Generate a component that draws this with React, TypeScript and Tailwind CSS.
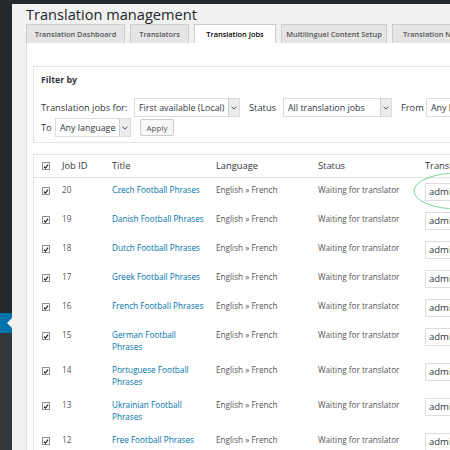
import React from "react";

const jobs = [
  { id: 20, title: ["Czech Football Phrases"] },
  { id: 19, title: ["Danish Football Phrases"] },
  { id: 18, title: ["Dutch Football Phrases"] },
  { id: 17, title: ["Greek Football Phrases"] },
  { id: 16, title: ["French Football Phrases"] },
  { id: 15, title: ["German Football", "Phrases"] },
  { id: 14, title: ["Portuguese Football", "Phrases"] },
  { id: 13, title: ["Ukrainian Football", "Phrases"] },
  { id: 12, title: ["Free Football Phrases"] },
];

const tabs = [
  { label: "Translation Dashboard", w: "w-[99px]" },
  { label: "Translators", w: "w-[59px]" },
  { label: "Translation Jobs", w: "w-[82px]", active: true },
  { label: "Multilingual Content Setup", w: "w-[106px]" },
  { label: "Translation Notifications", w: "w-[110px]" },
];

function Check() {
  return (
    <span className="flex h-[8px] w-[8px] shrink-0 items-center justify-center border border-[#8c8f94] bg-white">
      <svg viewBox="0 0 8 8" className="h-[7px] w-[7px]">
        <path d="M1.2 4.2 L3.2 6.2 L6.8 1.6" fill="none" stroke="#1e1e1e" strokeWidth="1.5" />
      </svg>
    </span>
  );
}

function Select({ label, w }: { label: string; w: string }) {
  return (
    <div className={`flex h-[19px] ${w} shrink-0 items-stretch border border-[#dcdcdc] bg-white`}>
      <span className="flex-1 overflow-hidden whitespace-nowrap pl-[4px] text-[8.9px] leading-[17px] text-[#32373c]">
        {label}
      </span>
      <span className="flex w-[11px] items-center justify-center border-l border-[#cfcfcf] bg-[#ececec]">
        <svg viewBox="0 0 6 4" className="h-[4px] w-[6px]">
          <path d="M0.6 0.6 L3 3.2 L5.4 0.6" fill="none" stroke="#555" strokeWidth="1" />
        </svg>
      </span>
    </div>
  );
}

export default function App() {
  return (
    <div
      className="relative flex h-[450px] w-[450px] flex-col overflow-hidden bg-[#23282d]"
      style={{ fontFamily: '"Open Sans", "Liberation Sans", sans-serif' }}
    >
      <div className="h-[4px] shrink-0 bg-[#23282d]" />
      <div className="flex min-h-0 flex-1">
        {/* admin sidebar */}
        <div className="flex w-[12px] shrink-0 flex-col">
          <div className="h-[309px] bg-[#23282d]" />
          <div className="relative h-[20px] bg-[#0073aa]">
            <span className="absolute right-0 top-[5px] h-0 w-0 border-y-[5px] border-r-[5px] border-y-transparent border-r-[#f1f1f1]" />
          </div>
          <div className="flex-1 bg-[#32373c]" />
        </div>

        {/* main */}
        <div className="min-w-0 flex-1 bg-[#f1f1f1] pl-[14px]">
          <h1 className="h-[20px] whitespace-nowrap text-[14.6px] font-normal leading-[20px] text-[#23282d]">
            Translation management
          </h1>
          <div className="flex h-[19px] gap-[5px]">
            {tabs.map((t) => (
              <div
                key={t.label}
                className={`${t.w} shrink-0 overflow-hidden whitespace-nowrap border border-b-0 border-[#ccc] text-center text-[7.4px] font-semibold leading-[18px] ${
                  t.active ? "bg-white text-[#000]" : "bg-[#e5e5e5] text-[#555]"
                }`}
              >
                {t.label}
              </div>
            ))}
          </div>

          {/* tab panel */}
          <div className="h-full border-l border-[#ddd] bg-white pl-[6px] pt-[23px]">
            {/* filter */}
            <div className="h-[77px] border border-r-0 border-[#e5e5e5] bg-white pl-[7px] pt-[7px] text-[#32373c]">
              <div className="text-[8.8px] font-bold leading-[13px]">Filter by</div>
              <div className="mt-[11px] flex items-center gap-[4px] whitespace-nowrap text-[9.3px]">
                <span className="w-[89px] shrink-0">Translation jobs for:</span>
                <Select label="First available (Local)" w="w-[106px]" />
                <span className="ml-[5px] w-[30px] shrink-0">Status</span>
                <Select label="All translation jobs" w="w-[109px]" />
                <span className="ml-[5px] w-[21px] shrink-0">From</span>
                <Select label="Any language" w="w-[80px]" />
              </div>
              <div className="mt-[1px] flex items-center gap-[4px] whitespace-nowrap text-[9.3px]">
                <span className="w-[10px] shrink-0">To</span>
                <Select label="Any language" w="w-[76px]" />
                <span className="ml-[5px] flex h-[17px] w-[34px] shrink-0 items-center justify-center rounded-[2px] border border-[#ccc] bg-[#f7f7f7] text-[8px] text-[#555]">
                  Apply
                </span>
              </div>
            </div>

            {/* table */}
            <div className="mt-[11px] border border-r-0 border-[#e5e5e5]">
              <div className="grid h-[23px] grid-cols-[28px_50px_104px_102px_107px_1fr] items-center border-b border-[#e1e1e1] whitespace-nowrap text-[9.3px] text-[#32373c]">
                <span className="pl-[8px]">
                  <Check />
                </span>
                <span>Job ID</span>
                <span>Title</span>
                <span>Language</span>
                <span>Status</span>
                <span>Translator</span>
              </div>
              {jobs.map((j) => (
                <div
                  key={j.id}
                  className="grid grid-cols-[28px_50px_104px_102px_107px_1fr] whitespace-nowrap text-[8.2px] leading-[12px] text-[#555]"
                >
                  <span className="pl-[8px] pt-[9px]">
                    <Check />
                  </span>
                  <span className="pb-[5px] pt-[6px]">{j.id}</span>
                  <span className="pb-[5px] pt-[6px] text-[#0073aa]">
                    {j.title.map((l) => (
                      <div key={l}>{l}</div>
                    ))}
                  </span>
                  <span className="pb-[5px] pt-[6px]">English » French</span>
                  <span className="pb-[5px] pt-[6px]">Waiting for translator</span>
                  <span className="pb-[6px] pt-[5px]">
                    <span className="block h-[18px] w-[60px] border border-[#ddd] pl-[3px] text-[9.5px] leading-[16px] text-[#32373c]">
                      admin
                    </span>
                  </span>
                </div>
              ))}
            </div>
          </div>
        </div>
      </div>

      {/* annotation ellipse */}
      <svg className="pointer-events-none absolute left-[410px] top-[170px] h-[42px] w-[60px]" viewBox="0 0 60 42">
        <ellipse cx="48" cy="21" rx="44" ry="18" fill="none" stroke="#7fd49b" strokeWidth="1" />
      </svg>
    </div>
  );
}
